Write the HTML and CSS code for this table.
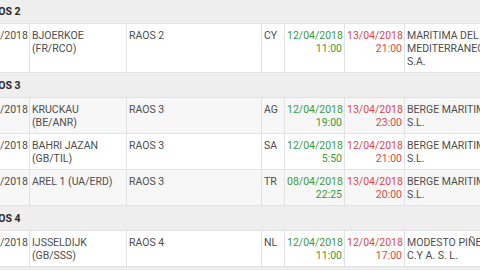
FILE: index.html
```html
<!DOCTYPE html>
<html>
<head>
<meta charset="utf-8">
<link rel="stylesheet" href="styles.css">
</head>
<body>
<div class="topbar"></div>
<div class="scroller">
<table class="grid">
<colgroup>
<col class="c-date"><col class="c-ship"><col class="c-port"><col class="c-flag"><col class="c-eta"><col class="c-etd"><col class="c-agent">
</colgroup>
<tbody>
<tr class="group first"><td colspan="7">RAOS 2</td></tr>
<tr class="row">
<td>12/04/2018</td><td>BJOERKOE (FR/RCO)</td><td>RAOS 2</td><td>CY</td>
<td class="eta">12/04/2018 11:00</td><td class="etd">13/04/2018 21:00</td><td>MARITIMA DEL MEDITERRANEO S.A.</td>
</tr>
<tr class="group"><td colspan="7">RAOS 3</td></tr>
<tr class="row alt">
<td>12/04/2018</td><td>KRUCKAU (BE/ANR)</td><td>RAOS 3</td><td>AG</td>
<td class="eta">12/04/2018 19:00</td><td class="etd">13/04/2018 23:00</td><td>BERGE MARITIMA S.L.</td>
</tr>
<tr class="row">
<td>12/04/2018</td><td>BAHRI JAZAN (GB/TIL)</td><td>RAOS 3</td><td>SA</td>
<td class="eta">12/04/2018 5:50</td><td class="etd">12/04/2018 21:00</td><td>BERGE MARITIMA S.L.</td>
</tr>
<tr class="row alt">
<td>08/04/2018</td><td>AREL 1 (UA/ERD)</td><td>RAOS 3</td><td>TR</td>
<td class="eta">08/04/2018 22:25</td><td class="etd">13/04/2018 20:00</td><td>BERGE MARITIMA S.L.</td>
</tr>
<tr class="group"><td colspan="7">RAOS 4</td></tr>
<tr class="row">
<td>12/04/2018</td><td>IJSSELDIJK (GB/SSS)</td><td>RAOS 4</td><td>NL</td>
<td class="eta">12/04/2018 11:00</td><td class="etd">12/04/2018 17:00</td><td>MODESTO PIÑEIRO C.Y A. S. L.</td>
</tr>
<tr class="group"><td colspan="7">RAOS 5</td></tr>
</tbody>
</table>
</div>
</body>
</html>
```
FILE: styles.css
```css
html, body {
  margin: 0;
  padding: 0;
  width: 480px;
  height: 270px;
  overflow: hidden;
  background: #eeeeee;
}
body {
  font-family: Roboto, "Liberation Sans", sans-serif;
  font-size: 10.5px;
  color: #4d4d4d;
}
.topbar {
  height: 2px;
  background: #3a3a3a;
}
.scroller {
  margin-left: -31px;
  margin-top: -4px;
}
.grid {
  border-collapse: collapse;
  table-layout: fixed;
  width: 535px;
}
.c-date { width: 60px; }
.c-ship { width: 97px; }
.c-port { width: 135px; }
.c-flag { width: 23px; }
.c-eta { width: 60px; }
.c-etd { width: 60px; }
.c-agent { width: 100px; }
.grid td {
  vertical-align: top;
  line-height: 13px;
  padding: 5px 2px 4px 2px;
  border: 1px solid #e2e2e2;
  white-space: normal;
  overflow: hidden;
}
.group td {
  background: #eeeeee;
  font-weight: bold;
  color: #2a2a2a;
  height: 24px;
  padding: 0 0 0 15px;
  vertical-align: middle;
  border-left: none;
  border-right: none;
}
.row td { background: #ffffff; }
.row.alt td { background: #f7f7f7; }
.grid td.eta { color: #3c9a3c; text-align: right; }
.grid td.etd { color: #e0464a; text-align: right; }
```
